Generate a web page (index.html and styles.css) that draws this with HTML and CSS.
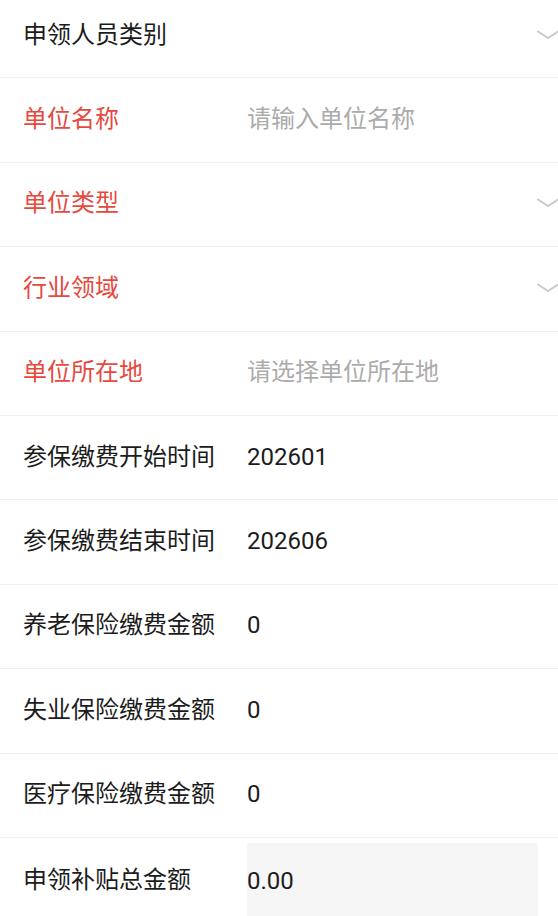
FILE: index.html
```html
<!DOCTYPE html>
<html lang="zh-CN">
<head>
<meta charset="utf-8">
<title>申领表单</title>
<link rel="stylesheet" href="styles.css">
</head>
<body>
<div class="form">
  <div class="row">
    <div class="label">申领人员类别</div>
    <div class="value"></div>
    <svg class="chev" viewBox="0 0 22 10" width="22" height="10"><path d="M1 1.5 L11 8 L21 1.5" fill="none" stroke="#c9c9d1" stroke-width="2" stroke-linecap="round" stroke-linejoin="round"/></svg>
  </div>
  <div class="row">
    <div class="label req">单位名称</div>
    <div class="value ph">请输入单位名称</div>
  </div>
  <div class="row">
    <div class="label req">单位类型</div>
    <div class="value"></div>
    <svg class="chev" viewBox="0 0 22 10" width="22" height="10"><path d="M1 1.5 L11 8 L21 1.5" fill="none" stroke="#c9c9d1" stroke-width="2" stroke-linecap="round" stroke-linejoin="round"/></svg>
  </div>
  <div class="row">
    <div class="label req">行业领域</div>
    <div class="value"></div>
    <svg class="chev" viewBox="0 0 22 10" width="22" height="10"><path d="M1 1.5 L11 8 L21 1.5" fill="none" stroke="#c9c9d1" stroke-width="2" stroke-linecap="round" stroke-linejoin="round"/></svg>
  </div>
  <div class="row">
    <div class="label req">单位所在地</div>
    <div class="value ph">请选择单位所在地</div>
  </div>
  <div class="row">
    <div class="label">参保缴费开始时间</div>
    <div class="value">202601</div>
  </div>
  <div class="row">
    <div class="label">参保缴费结束时间</div>
    <div class="value">202606</div>
  </div>
  <div class="row">
    <div class="label">养老保险缴费金额</div>
    <div class="value">0</div>
  </div>
  <div class="row">
    <div class="label">失业保险缴费金额</div>
    <div class="value">0</div>
  </div>
  <div class="row">
    <div class="label">医疗保险缴费金额</div>
    <div class="value">0</div>
  </div>
  <div class="row last">
    <div class="label">申领补贴总金额</div>
    <div class="value box">0.00</div>
  </div>
</div>
</body>
</html>
```
FILE: styles.css
```css
html, body {
  margin: 0;
  padding: 0;
  background: #ffffff;
  overflow: hidden;
}
body {
  font-family: Roboto, "Noto Sans CJK SC", sans-serif;
  font-size: 24px;
  color: #1c1c1c;
}
.form {
  margin-top: -6px;
}
.row {
  display: flex;
  align-items: center;
  box-sizing: border-box;
  height: 84.4px;
  padding-left: 23px;
  border-bottom: 1px solid #f1f1f1;
}
.label {
  width: 224px;
  flex-shrink: 0;
  line-height: 32px;
  padding-bottom: 2px;
  white-space: nowrap;
}
.label.req {
  color: #e6493e;
}
.value {
  flex: 1;
  line-height: 32px;
  padding-bottom: 2px;
  white-space: nowrap;
}
.value.ph {
  color: #ababab;
}
.chev {
  flex-shrink: 0;
  margin-right: -1px;
  margin-bottom: 2px;
}
.row.last {
  align-items: stretch;
  border-bottom: none;
}
.row.last .label {
  display: flex;
  align-items: center;
  padding-bottom: 0;
}
.row.last .value.box {
  flex: 0 0 291px;
  margin-top: 5px;
  background: #f6f6f6;
  display: flex;
  align-items: center;
  padding-bottom: 4px;
  box-sizing: border-box;
}
```
